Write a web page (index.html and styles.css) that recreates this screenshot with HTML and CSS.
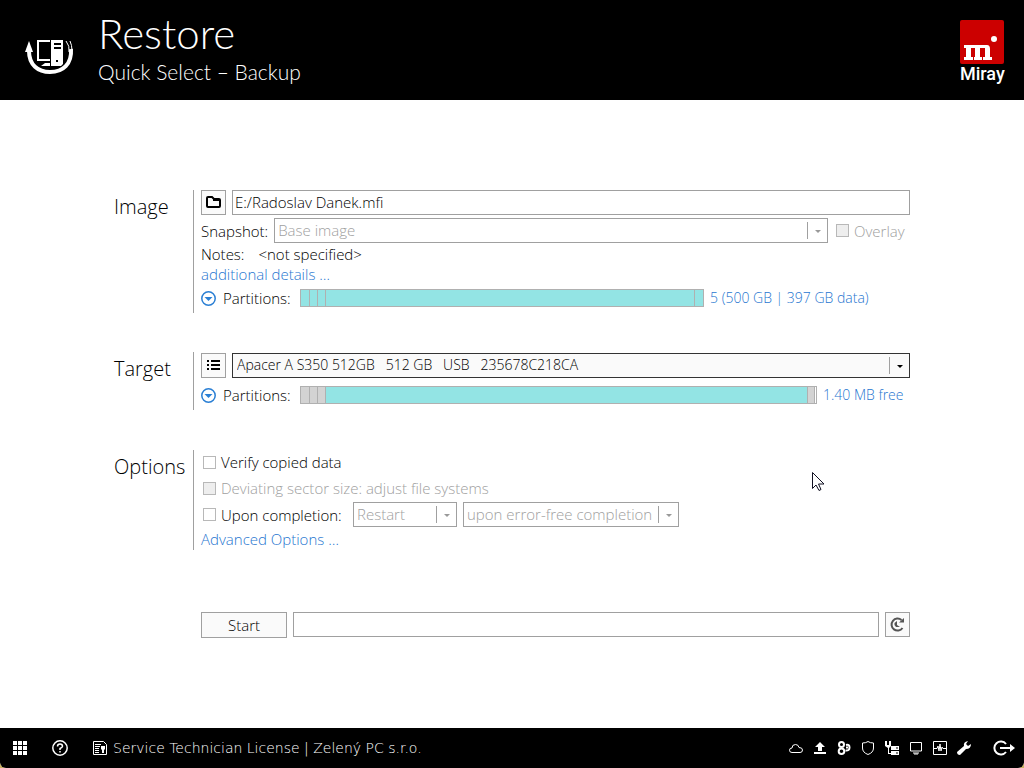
FILE: index.html
```
<!DOCTYPE html>
<html lang="en">
  <head>
    <meta charset="UTF-8" />
    <title>Restore</title>
    <meta name="viewport" content="width=device-width, initial-scale=1.0" />
    <link rel="stylesheet" href="styles.css">
  </head>
  <body>
    <header class="top-bar">
      <svg class="restore-icon" width="50" height="38" viewBox="0 0 50 38" aria-hidden="true">
        <path d="M4 12C4 26 13 33 25 33C38 33 47 25 46 10" fill="none" stroke="#fff" stroke-width="4" />
        <path d="M0 13L4 2L8 13Z" fill="#fff" />
        <path d="M41 2Q45 7 44 13M45 2Q47 6 47 12" fill="none" stroke="#fff" stroke-width="1" />
        <path d="M25 2H13V21H25" fill="none" stroke="#fff" stroke-width="2" />
        <path d="M16 27L20 24H25V27Z" fill="#fff" />
        <path d="M26 1H38V25L36 27H26Z" fill="#fff" />
        <path d="M29 5H36M29 9H36" stroke="#000" stroke-width="2" />
        <rect x="31" y="21" width="2" height="2" />
      </svg>
      <div class="titles">
        <h1>Restore</h1>
        <p>Quick Select – Backup</p>
      </div>
      <div class="brand">
        <svg width="44" height="44" viewBox="0 0 44 44" aria-hidden="true">
          <rect width="44" height="44" rx="2" fill="#c00" />
          <circle cx="34" cy="19" r="3" fill="#fff" />
          <path d="M4 25H27Q30 25 30 29V37H32V40H23V37H25V28H20V37H22V40H14V37H15V28H11V37H13V40H4V37H6V28H4Z" fill="#fff" />
        </svg>
        <span>Miray</span>
      </div>
    </header>

    <main>
      <section class="group image-group">
        <h2>Image</h2>
        <div class="group-body">
          <div class="row">
            <button class="icon-btn" aria-label="Browse">
              <svg width="15" height="13" viewBox="0 0 15 13"><path d="M1 2Q1 1 2 1H6L8 3H13Q14 3 14 4V10Q14 11 13 11H2Q1 11 1 10ZM7 4H14" fill="none" stroke="#000" stroke-width="2" /></svg>
            </button>
            <input class="field" type="text" value="E:/Radoslav Danek.mfi" aria-label="Image file" />
          </div>
          <div class="row">
            <label for="snapshot">Snapshot:</label>
            <div class="select disabled grow">
              <select id="snapshot" disabled><option>Base image</option></select>
            </div>
            <label class="check disabled overlay"><input type="checkbox" disabled /> Overlay</label>
          </div>
          <div class="text-row notes"><span>Notes:</span><span>&lt;not specified&gt;</span></div>
          <div class="text-row"><a href="#">additional details …</a></div>
          <div class="partitions">
            <button class="expander" aria-label="Show image partitions">
              <svg width="15" height="15" viewBox="0 0 15 15"><circle cx="7.5" cy="7.5" r="6.7" fill="none" stroke="#2a7fd4" stroke-width="1.5" /><path d="M3.5 6H11.5L7.5 10Z" fill="#2a7fd4" /></svg>
            </button>
            <span class="caption">Partitions:</span>
            <div class="bar">
              <i class="used" style="width: 8px"></i>
              <i class="used" style="width: 7px"></i>
              <i class="used" style="width: 7px"></i>
              <i class="used main-part"></i>
              <i class="used" style="width: 8px"></i>
            </div>
            <a class="info wide" href="#">5 (500 GB | 397 GB data)</a>
          </div>
        </div>
      </section>

      <section class="group target-group">
        <h2>Target</h2>
        <div class="group-body">
          <div class="row">
            <button class="icon-btn" aria-label="Select disk">
              <svg width="13" height="11" viewBox="0 0 13 11"><path d="M0 1H2M4 1H13M0 5H2M4 5H13M0 9H2M4 9H13" stroke="#000" stroke-width="2" /></svg>
            </button>
            <div class="select active grow">
              <select aria-label="Target disk"><option>Apacer A S350 512GB &nbsp; 512 GB &nbsp; USB &nbsp; 235678C218CA</option></select>
            </div>
          </div>
          <div class="partitions">
            <button class="expander" aria-label="Show target partitions">
              <svg width="15" height="15" viewBox="0 0 15 15"><circle cx="7.5" cy="7.5" r="6.7" fill="none" stroke="#2a7fd4" stroke-width="1.5" /><path d="M3.5 6H11.5L7.5 10Z" fill="#2a7fd4" /></svg>
            </button>
            <span class="caption">Partitions:</span>
            <div class="bar">
              <i class="system" style="width: 8px"></i>
              <i class="system" style="width: 7px"></i>
              <i class="system" style="width: 7px"></i>
              <i class="used main-part"></i>
              <i class="system" style="width: 6px"></i>
              <i style="width: 1px"></i>
            </div>
            <a class="info" href="#">1.40 MB free</a>
          </div>
        </div>
      </section>

      <section class="group options-group">
        <h2>Options</h2>
        <div class="group-body">
          <label class="check"><input type="checkbox" /> Verify copied data</label>
          <label class="check disabled"><input type="checkbox" disabled /> Deviating sector size: adjust file systems</label>
          <div class="row completion">
            <label class="check"><input type="checkbox" /> Upon completion:</label>
            <div class="select disabled action">
              <select aria-label="Action" disabled><option>Restart</option></select>
            </div>
            <div class="select disabled condition">
              <select aria-label="Condition" disabled><option>upon error-free completion</option></select>
            </div>
          </div>
          <div class="text-row"><a href="#">Advanced Options …</a></div>
        </div>
      </section>

      <div class="start-row">
        <button class="start-btn">Start</button>
        <input class="field" type="text" readonly aria-label="Status" />
        <button class="icon-btn" aria-label="Schedule">
          <svg width="15" height="15" viewBox="0 0 15 15"><path d="M12.5 11A6 6 0 1 1 11.5 3" fill="none" stroke="#555" stroke-width="2" /><path d="M9 5.5H14V1Z" fill="#555" /><path d="M7 4V8L10 10H6L4.5 8V6Z" fill="#555" /></svg>
        </button>
      </div>
    </main>

    <footer class="task-bar">
      <button aria-label="Menu">
        <svg width="14" height="14" viewBox="0 0 14 14" fill="#fff"><path d="M0 0H4V4H0ZM5 0H9V4H5ZM10 0H14V4H10ZM0 5H4V9H0ZM5 5H9V9H5ZM10 5H14V9H10ZM0 10H4V14H0ZM5 10H9V14H5ZM10 10H14V14H10Z" /></svg>
      </button>
      <button class="help" aria-label="Help">
        <svg width="16" height="16" viewBox="0 0 16 16" fill="none" stroke="#fff"><circle cx="8" cy="8" r="7.2" stroke-width="1.5" /><path d="M5.5 6.5Q5.5 4 8 4T10.5 6.3Q10.5 7.5 8 8.5V10M8 11V12.5" stroke-width="1.5" /></svg>
      </button>
      <div class="license">
        <svg width="14" height="14" viewBox="0 0 14 14" fill="none" stroke="#fff"><path d="M.5.5H10.5L13.5 3.5V13.5H.5ZM2 3.5H8M2 5.5H7M2 7.5H6M2 9.5H6M2 11.5H6" /><path d="M8 5H12V8L11 9V12H9V9L8 8Z" fill="#fff" stroke="none" /></svg>
        <span>Service Technician License | Zelený PC s.r.o.</span>
      </div>
      <div class="tray">
        <svg width="14" height="14" viewBox="0 0 14 14" fill="none" stroke="#fff"><path d="M3 11.5Q.5 11.5 .5 9.2T3 7Q3 3.5 6.5 3.5Q9.5 3.5 10 6.5Q13.5 6.5 13.5 9T11 11.5Z" /></svg>
        <svg width="14" height="14" viewBox="0 0 14 14" fill="#fff"><path d="M7 1L12 6H9V10H5V6H2ZM1 11H13V13H1Z" /></svg>
        <svg width="14" height="14" viewBox="0 0 14 14" fill="none" stroke="#fff" stroke-width="2"><circle cx="4.5" cy="3.5" r="2.5" /><circle cx="4.5" cy="10.2" r="2.8" /><path d="M9 4Q12.500 3 12.500 6.500T8.500 9.500" /><path d="M9 6.500H11" /></svg>
        <svg width="14" height="14" viewBox="0 0 14 14" fill="none" stroke="#fff"><path d="M7 .5Q9 2 12.5 2V7Q12.5 11.5 7 13.5Q1.5 11.5 1.5 7V2Q5 2 7 .5Z" /></svg>
        <svg width="14" height="14" viewBox="0 0 14 14" fill="#fff"><path d="M0 0H2V4H4V0H6V5L4 7V12H6V13H3V7L0 5ZM6 5H14V9H6ZM6 10H14V14H6Z" /><path d="M11 7H13M11 12H13" stroke="#000" /></svg>
        <svg width="14" height="14" viewBox="0 0 14 14" fill="none" stroke="#fff"><path d="M1.5 1.5H12.5V10H1.5Z" /><path d="M4 12H10M5 13H9" /></svg>
        <svg width="14" height="14" viewBox="0 0 14 14" fill="none" stroke="#fff"><path d="M.5.5H13.5V13.5H.5ZM1 7.5H4L5 5L6 10L7 3L8 10L9 6L10 7.5H13" /></svg>
        <svg width="14" height="14" viewBox="0 0 14 14"><path d="M0 11L7 5Q6 1 11 0L9 3L11 5L14 3Q14 8 9 8L3 14Q0 14 0 11Z" fill="#fff" /></svg>
      </div>
      <button aria-label="Exit">
        <svg width="22" height="16" viewBox="0 0 22 16"><path d="M13 4A6.5 6.5 0 1 0 13 12M7 8H19" fill="none" stroke="#fff" stroke-width="2" /><path d="M17 4L22 8L17 12Z" fill="#fff" /></svg>
      </button>
    </footer>

    <svg class="pointer" width="13" height="20" viewBox="0 0 13 20" aria-hidden="true"><path d="M.5.5V16.5L4 13L7 18.5L9 17.5L6.5 12H12Z" fill="#fff" stroke="#112" /></svg>
  </body>
</html>
```
FILE: styles.css
```
* {
  box-sizing: border-box;
}

html {
  background: #c9b060;
}

body {
  margin: 0;
  min-height: 100vh;
  display: flex;
  flex-direction: column;
  background: #fff;
  border-radius: 0 0 6px 6px;
  overflow: hidden;
  color: #000;
  font-family: 'Open Sans', 'Noto Sans', sans-serif;
  font-size: 15px;
  font-weight: 300;
  line-height: 18px;
}

h1,
h2,
p {
  margin: 0;
  font-weight: 300;
}

button,
input,
select {
  font: inherit;
  color: inherit;
  margin: 0;
}

button {
  display: flex;
  align-items: center;
  justify-content: center;
  padding: 0;
  background: #fafafa;
  border: 1px solid #a0a0a0;
}

svg {
  display: block;
}

a {
  color: #1f76d0;
  text-decoration: none;
}

.top-bar {
  display: flex;
  align-items: flex-start;
  min-height: 100px;
  padding: 0 20px 0 25px;
  background: #000;
  color: #fff;
}

.restore-icon {
  margin-top: 39px;
}

.titles {
  flex: 1;
  margin-left: 23px;
  padding-top: 10px;
  font-family: Lato, sans-serif;
}

.titles h1 {
  font-size: 42px;
  line-height: 46px;
}

.titles p {
  font-size: 21px;
  line-height: 32px;
}

.brand {
  width: 44px;
  padding-top: 20px;
  font-family: Roboto, sans-serif;
  font-size: 18px;
  font-weight: 500;
  line-height: 20px;
}

main {
  flex: 1;
  padding: 90px 114px 40px;
}

.group {
  display: grid;
  grid-template-columns: 79px 1fr;
}

.image-group {
  margin-bottom: 39px;
}

.target-group {
  margin-bottom: 40px;
}

.options-group {
  margin-bottom: 62px;
}

.group h2 {
  padding-top: 4px;
  font-size: 20px;
  line-height: 26px;
}

.group-body {
  border-left: 1px solid #a0a0a0;
  padding-left: 7px;
}

.image-group .group-body {
  padding-bottom: 6px;
}

.target-group .group-body {
  padding-top: 1px;
  padding-bottom: 6px;
}

.row,
.start-row {
  display: flex;
  align-items: center;
  gap: 6px;
}

.image-group .row + .row {
  margin: 3px 0 2px;
}

.icon-btn {
  width: 25px;
  height: 25px;
}

.field {
  flex: 1;
  min-width: 0;
  height: 25px;
  padding: 0 2px 1px;
  border: 1px solid #a0a0a0;
  background: #fff;
}

.select {
  position: relative;
}

.grow {
  flex: 1;
}

.select select {
  display: block;
  width: 100%;
  height: 25px;
  padding: 0 22px 2px 3px;
  appearance: none;
  border: 1px solid #a0a0a0;
  border-radius: 0;
  background: #fff;
  opacity: 1;
}

.select.active select {
  padding-left: 4px;
  border-color: #333;
  background: #fafafa;
  font-size: 14px;
}

/* divider and arrow over the select */
.select::before {
  content: '';
  position: absolute;
  top: 4px;
  right: 20px;
  height: 17px;
  border-left: 1px solid #a0a0a0;
}

.select::after {
  content: '';
  position: absolute;
  top: 12px;
  right: 7px;
  border: 3px solid transparent;
  border-top-color: #000;
  border-bottom: 0;
}

.select.disabled::after {
  border-top-color: #999;
}

.disabled,
.disabled select {
  color: #a0a0a0;
}

.check {
  display: flex;
  align-items: center;
  gap: 5px;
  padding-left: 2px;
  min-height: 24px;
}

.check input {
  appearance: none;
  width: 13px;
  height: 13px;
  border: 1px solid #b8b8b8;
  background: #fff;
}

.check input:disabled {
  background: #eee;
}

.overlay {
  width: 76px;
}

.options-group .check {
  margin-bottom: 2px;
}

.options-group .row .check {
  width: 146px;
  margin: 0;
}

.action {
  width: 104px;
}

.condition {
  width: 216px;
}

.text-row {
  height: 20px;
}

.notes {
  display: flex;
  gap: 14px;
}

.options-group .text-row {
  margin-top: 3px;
}

.partitions {
  display: flex;
  align-items: center;
  height: 18px;
  margin-top: 4px;
}

.target-group .partitions {
  margin-top: 8px;
}

.expander {
  border: 0;
  background: none;
}

.caption {
  width: 77px;
  margin-left: 7px;
}

.bar {
  flex: 1;
  display: flex;
  gap: 1px;
  height: 18px;
  border: 1px solid #b0b0b0;
}

.bar i {
  background: #fff;
  box-shadow: 1px 0 #b0b0b0;
}

.bar i:last-child {
  box-shadow: none;
}

.bar .used {
  background: #93e4e4;
}

.bar .system {
  background: #d3d3d3;
}

.bar .main-part {
  flex: 1;
}

.info {
  width: 87px;
  margin-left: 6px;
  font-size: 14px;
}

.info.wide {
  width: 200px;
}

.start-btn {
  width: 86px;
  height: 26px;
}

.start-row {
  align-items: flex-start;
  padding-left: 87px;
}

.task-bar {
  display: flex;
  align-items: center;
  height: 40px;
  padding: 0 9px 0 13px;
  background: #000;
  color: #fff;
}

.task-bar button {
  border: 0;
  background: none;
}

.task-bar .help {
  margin-left: 25px;
}

.license {
  display: flex;
  align-items: center;
  gap: 6px;
  margin-left: 25px;
  font-family: 'DejaVu Sans', sans-serif;
  font-size: 14px;
}

.tray {
  display: flex;
  gap: 10px;
  margin-left: auto;
  margin-right: 22px;
}

/* mouse pointer */
.pointer {
  position: absolute;
  left: 812px;
  top: 472px;
}
```
